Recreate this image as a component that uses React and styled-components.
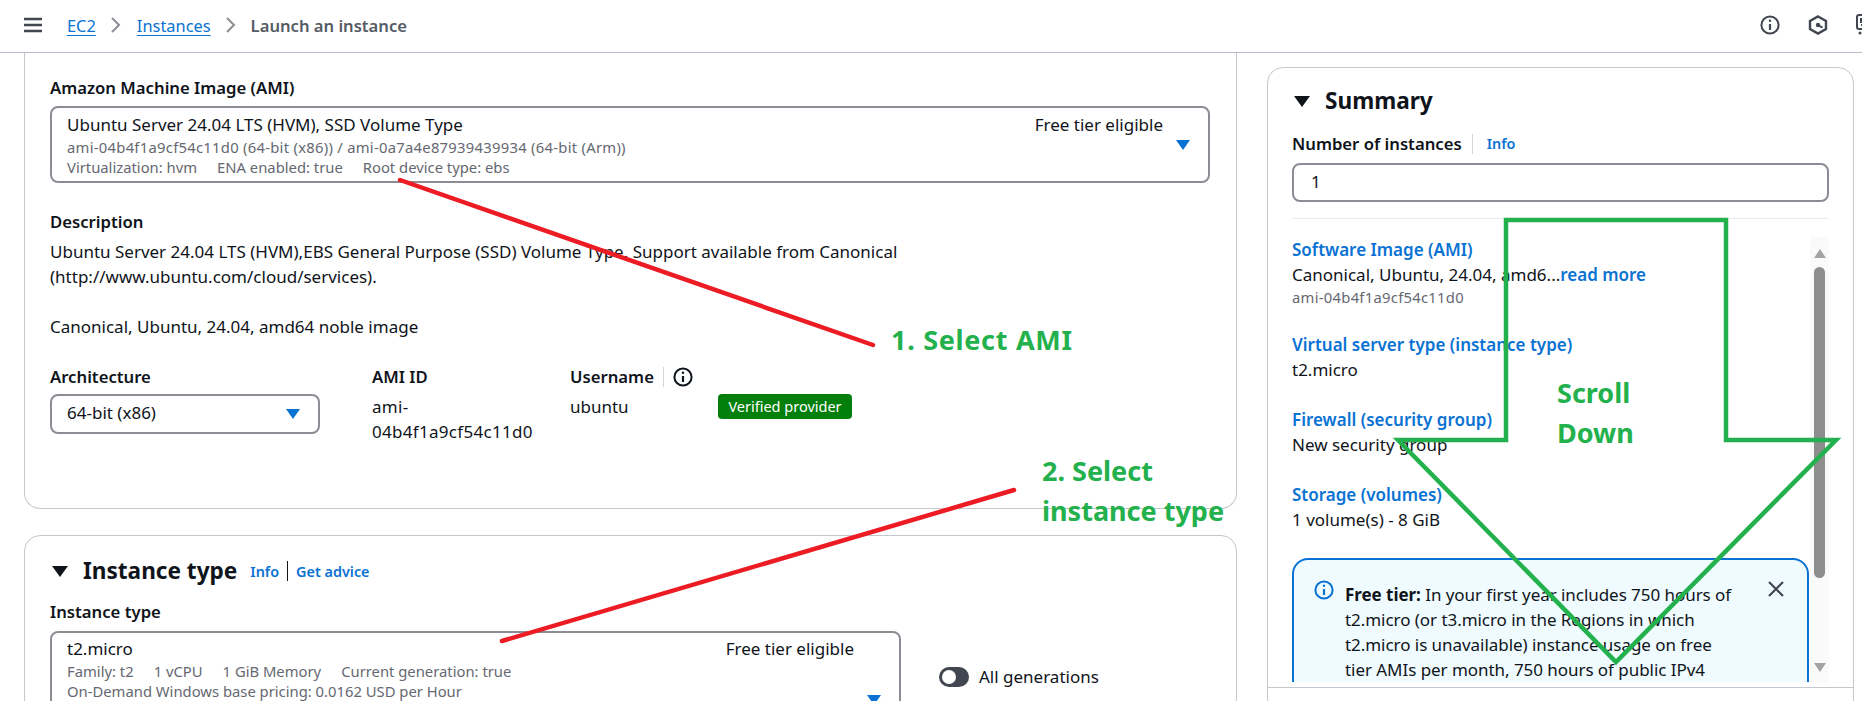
import React from "react";
import styled, { createGlobalStyle } from "styled-components";

const GlobalStyle = createGlobalStyle`
  html, body {
    margin: 0;
    padding: 0;
    background: #fff;
  }
  body {
    font-family: "Noto Sans", "Open Sans", sans-serif;
    font-size: 17px;
    line-height: 25px;
    color: #0f141a;
  }
`;

const Page = styled.div`
  position: relative;
  width: 1862px;
  height: 701px;
  overflow: hidden;
  background: #fff;
`;

const TopBar = styled.header`
  display: flex;
  align-items: center;
  height: 50px;
  padding: 0 0 2px 24px;
  border-bottom: 1px solid #b6bec9;
  box-sizing: content-box;
`;

const Crumb = styled.a`
  color: #0972d3;
  text-decoration: underline;
  text-underline-offset: 3px;
  font-size: 16.4px;
  margin-left: ${(p) => p.$before || 0}px;
`;

const CrumbCurrent = styled.span`
  color: #545b64;
  font-weight: 600;
  font-size: 16.6px;
`;

const BarIcons = styled.div`
  display: flex;
  align-items: center;
  gap: 28px;
  margin-left: auto;
  margin-right: -14px;
  color: #424650;
`;

const Columns = styled.div`
  display: flex;
  align-items: flex-start;
  gap: 30px;
  padding-left: 24px;
`;

const LeftColumn = styled.main`
  display: flex;
  flex-direction: column;
  gap: 26px;
  width: 1213px;
  flex-shrink: 0;
`;

const Card = styled.section`
  box-sizing: border-box;
  background: #fff;
  border: 1px solid #c6c6cd;
  border-radius: 16px;
  padding: 20px 25px;
`;

const ImageCard = styled(Card)`
  border-top: 0;
  border-top-left-radius: 0;
  border-top-right-radius: 0;
  padding-top: 22px;
  padding-bottom: 64px;
`;

const TypeCard = styled(Card)`
  height: 300px;
`;

const HeadingRow = styled.div`
  display: flex;
  align-items: center;
  height: 30px;
  margin-left: 2px;
`;

const Caret = styled.span`
  display: inline-block;
  flex-shrink: 0;
  width: 0;
  height: 0;
  border-left: ${(p) => p.$size / 2}px solid transparent;
  border-right: ${(p) => p.$size / 2}px solid transparent;
  border-top: ${(p) => p.$size * 0.72}px solid ${(p) => p.$color};
`;

const Heading = styled.h2`
  margin: 0 0 0 15px;
  font-size: 22.6px;
  line-height: 30px;
  font-weight: 700;
`;

const InfoLink = styled.a`
  color: #0972d3;
  font-size: 14.4px;
  font-weight: 600;
  margin-left: ${(p) => p.$before || 0}px;
`;

const Pipe = styled.span`
  width: 1px;
  height: 20px;
  margin: 0 ${(p) => p.$space}px;
  background: ${(p) => p.$color};
`;

const Label = styled.div`
  font-size: 16.7px;
  font-weight: 600;
  margin-bottom: ${(p) => p.$after ?? 5}px;
  margin-top: ${(p) => p.$before ?? 0}px;
  white-space: nowrap;
`;

const SelectBox = styled.div`
  box-sizing: border-box;
  display: flex;
  align-items: center;
  width: ${(p) => p.$width}px;
  height: ${(p) => p.$height}px;
  padding: ${(p) => p.$top ?? 4}px 18px 4px 15px;
  border: 2px solid #8c8c94;
  border-radius: 8px;
`;

const OptionText = styled.div`
  flex: 1;
  align-self: flex-start;
  min-width: 0;
`;

const SubLine = styled.div`
  display: flex;
  gap: 20px;
  font-size: 14.8px;
  line-height: 20px;
  letter-spacing: ${(p) => p.$track || 0}px;
  color: #656871;
  white-space: nowrap;
`;

const TierTag = styled.div`
  align-self: flex-start;
  margin-right: 13px;
  white-space: nowrap;
`;

const Paragraph = styled.p`
  margin: 0;
`;

const DetailRow = styled.div`
  display: flex;
  align-items: flex-start;
  margin-top: 25px;
`;

const DetailColumn = styled.div`
  width: ${(p) => p.$width}px;
  flex-shrink: 0;
  margin-right: ${(p) => p.$space || 0}px;
  white-space: nowrap;
`;

const AmiValue = styled.div`
  letter-spacing: 0.3px;
`;

const UsernameHead = styled.div`
  display: flex;
  align-items: center;
  font-size: 16.7px;
  font-weight: 600;
  margin-bottom: 5px;
`;

const Badge = styled.span`
  display: block;
  box-sizing: border-box;
  width: 134px;
  height: 25px;
  margin-top: 30px;
  border-radius: 4px;
  background: #037f0c;
  color: #fff;
  font-size: 14.5px;
  line-height: 25px;
  text-align: center;
  white-space: nowrap;
`;

const TypeRow = styled.div`
  display: flex;
  align-items: flex-start;
  gap: 38px;
`;

const ToggleGroup = styled.div`
  display: flex;
  align-items: center;
  gap: 10px;
  margin-top: 33px;
`;

const Toggle = styled.span`
  box-sizing: border-box;
  display: flex;
  align-items: center;
  width: 30px;
  height: 20px;
  padding-left: 3px;
  border-radius: 10px;
  background: #424650;
  &::before {
    content: "";
    width: 14px;
    height: 14px;
    border-radius: 50%;
    background: #fff;
  }
`;

const SummaryCard = styled(Card)`
  position: relative;
  width: 587px;
  height: 660px;
  flex-shrink: 0;
  margin-top: 14px;
  padding: 18px 24px 0;
`;

const NumberLabel = styled.div`
  display: flex;
  align-items: center;
  height: 25px;
  margin-top: 15px;
  font-size: 16.7px;
  font-weight: 600;
`;

const NumberInput = styled.div`
  box-sizing: border-box;
  width: 537px;
  height: 39px;
  margin-top: 7px;
  padding-left: 17px;
  border: 2px solid #8c8c94;
  border-radius: 8px;
  line-height: 33px;
`;

const Rule = styled.div`
  width: 537px;
  height: 1px;
  margin: 16px 0 18px;
  background: #e9ebed;
`;

const ScrollArea = styled.div`
  display: flex;
  width: 537px;
  height: 445px;
  overflow: hidden;
`;

const SummaryList = styled.div`
  width: 517px;
  flex-shrink: 0;
`;

const SummaryGroup = styled.div`
  margin-bottom: 25px;
`;

const SummaryTitle = styled.a`
  display: block;
  color: #0972d3;
  font-weight: 600;
`;

const SummaryValue = styled.div`
  white-space: nowrap;
`;

const ReadMore = styled.a`
  color: #0972d3;
  font-weight: 600;
`;

const SummaryMeta = styled.div`
  font-size: 14.8px;
  line-height: 20px;
  letter-spacing: 0.27px;
  color: #656871;
`;

const Alert = styled.div`
  box-sizing: border-box;
  display: flex;
  align-items: flex-start;
  gap: 11px;
  width: 517px;
  height: 200px;
  margin-top: 26px;
  padding: 20px 22px 0 20px;
  border: 2px solid #0972d3;
  border-radius: 16px;
  background: #f0fbff;
`;

const AlertText = styled.div`
  flex: 1;
  padding-top: 2px;
  letter-spacing: -0.05px;
  white-space: nowrap;
`;

const AlertClose = styled.span`
  display: flex;
  color: #424650;
`;

const Scrollbar = styled.div`
  display: flex;
  flex-direction: column;
  align-items: center;
  width: 19px;
  margin-left: 1px;
  padding-top: 12px;
  background: #fafafa;
`;

const ScrollUp = styled.span`
  width: 0;
  height: 0;
  border-left: 6px solid transparent;
  border-right: 6px solid transparent;
  border-bottom: 9px solid #a3a3a3;
`;

const ScrollDown = styled.span`
  width: 0;
  height: 0;
  margin-top: 85px;
  border-left: 6px solid transparent;
  border-right: 6px solid transparent;
  border-top: 9px solid #a3a3a3;
`;

const ScrollThumb = styled.span`
  width: 11px;
  height: 311px;
  margin-top: 9px;
  border-radius: 6px;
  background: #8d8d8d;
`;

const SummaryFooter = styled.div`
  position: absolute;
  left: 0;
  right: 0;
  top: 619px;
  height: 40px;
  border-top: 1px solid #c6c6cd;
  background: #fff;
`;

const Markup = styled.svg`
  position: absolute;
  left: 0;
  top: 0;
  pointer-events: none;
`;

const Note = styled.div`
  position: absolute;
  left: ${(p) => p.$x}px;
  top: ${(p) => p.$y}px;
  font-size: 27px;
  line-height: 40px;
  font-weight: 700;
  letter-spacing: ${(p) => p.$track || 0}px;
  color: #22b14c;
  white-space: nowrap;
`;

const MenuIcon = () => (
  <svg width="18" height="16" viewBox="0 0 18 16" fill="none" stroke="#424650" strokeWidth="2.4">
    <path d="M0 2h18M0 8h18M0 14h18" />
  </svg>
);

const ChevronIcon = styled.svg`
  margin: 0 ${(p) => p.$space}px;
`;

const Chevron = ({ space }) => (
  <ChevronIcon $space={space} width="12" height="18" viewBox="0 0 12 18" fill="none" stroke="#8c8c94" strokeWidth="2">
    <path d="M2 2l7 7-7 7" />
  </ChevronIcon>
);

const InfoCircle = ({ size = 20, color = "#424650", weight = 2 }) => (
  <svg width={size} height={size} viewBox="0 0 20 20" fill="none" stroke={color} strokeWidth={weight}>
    <circle cx="10" cy="10" r="8.6" />
    <path d="M10 9v6" strokeWidth="2.2" />
    <circle cx="10" cy="5.8" r="1.2" fill={color} stroke="none" />
  </svg>
);

const HexIcon = () => (
  <svg width="20" height="20" viewBox="0 0 20 20" fill="none" stroke="#424650" strokeWidth="2.4">
    <path d="M10 1.5l8 4.5v8l-8 4.5-8-4.5v-8z" />
    <circle cx="10" cy="10" r="2.2" fill="#424650" stroke="none" />
    <path d="M10 10l4.5 2.6" strokeWidth="2" />
  </svg>
);

const PanelIcon = () => (
  <svg width="20" height="22" viewBox="0 0 20 22" fill="none" stroke="#424650" strokeWidth="2">
    <rect x="1" y="1" width="18" height="14" rx="2" />
    <path d="M5 5h3v3H5zM5 11h3" />
    <circle cx="4" cy="19" r="1.5" fill="#424650" stroke="none" />
  </svg>
);

const CloseIcon = () => (
  <svg width="18" height="18" viewBox="0 0 18 18" fill="none" stroke="currentColor" strokeWidth="2.2">
    <path d="M2 2l14 14M16 2L2 16" />
  </svg>
);

const summaryItems = [
  {
    title: "Virtual server type (instance type)",
    value: "t2.micro",
  },
  {
    title: "Firewall (security group)",
    value: "New security group",
  },
];

export default function App() {
  return (
    <Page>
      <GlobalStyle />
      <TopBar>
        <MenuIcon />
        <Crumb $before={25}>EC2</Crumb>
        <Chevron space={14.5} />
        <Crumb>Instances</Crumb>
        <Chevron space={14} />
        <CrumbCurrent>Launch an instance</CrumbCurrent>
        <BarIcons>
          <InfoCircle />
          <HexIcon />
          <PanelIcon />
        </BarIcons>
      </TopBar>

      <Columns>
        <LeftColumn>
          <ImageCard>
            <Label $after={6}>Amazon Machine Image (AMI)</Label>
            <SelectBox $width={1160} $height={77}>
              <OptionText>
                Ubuntu Server 24.04 LTS (HVM), SSD Volume Type
                <SubLine $track={0.27}>ami-04b4f1a9cf54c11d0 (64-bit (x86)) / ami-0a7a4e87939439934 (64-bit (Arm))</SubLine>
                <SubLine>
                  <span>Virtualization: hvm</span>
                  <span>ENA enabled: true</span>
                  <span>Root device type: ebs</span>
                </SubLine>
              </OptionText>
              <TierTag>Free tier eligible</TierTag>
              <Caret $size={14} $color="#0972d3" />
            </SelectBox>

            <Label $before={26}>Description</Label>
            <Paragraph>
              Ubuntu Server 24.04 LTS (HVM),EBS General Purpose (SSD) Volume Type. Support available from Canonical
              <br />
              (http://www.ubuntu.com/cloud/services).
              <br />
              <br />
              Canonical, Ubuntu, 24.04, amd64 noble image
            </Paragraph>

            <DetailRow>
              <DetailColumn $width={270} $space={52}>
                <Label>Architecture</Label>
                <SelectBox $width={270} $height={40}>
                  <OptionText>64-bit (x86)</OptionText>
                  <Caret $size={14} $color="#0972d3" />
                </SelectBox>
              </DetailColumn>
              <DetailColumn $width={165} $space={33}>
                <Label>AMI ID</Label>
                <AmiValue>
                  ami-
                  <br />
                  04b4f1a9cf54c11d0
                </AmiValue>
              </DetailColumn>
              <DetailColumn $width={148}>
                <UsernameHead>
                  Username
                  <Pipe $space={9} $color="#d1d5db" />
                  <InfoCircle color="#0f141a" />
                </UsernameHead>
                ubuntu
              </DetailColumn>
              <Badge>Verified provider</Badge>
            </DetailRow>
          </ImageCard>

          <TypeCard>
            <HeadingRow>
              <Caret $size={16} $color="#0f141a" />
              <Heading>Instance type</Heading>
              <InfoLink $before={13}>Info</InfoLink>
              <Pipe $space={8} $color="#0f141a" />
              <InfoLink>Get advice</InfoLink>
            </HeadingRow>
            <Label $before={13} $after={7}>
              Instance type
            </Label>
            <TypeRow>
              <SelectBox $width={851} $height={138} $top={3}>
                <OptionText>
                  t2.micro
                  <SubLine>
                    <span>Family: t2</span>
                    <span>1 vCPU</span>
                    <span>1 GiB Memory</span>
                    <span>Current generation: true</span>
                  </SubLine>
                  <SubLine>On-Demand Windows base pricing: 0.0162 USD per Hour</SubLine>
                </OptionText>
                <TierTag>Free tier eligible</TierTag>
                <Caret $size={14} $color="#0972d3" />
              </SelectBox>
              <ToggleGroup>
                <Toggle />
                All generations
              </ToggleGroup>
            </TypeRow>
          </TypeCard>
        </LeftColumn>

        <SummaryCard>
          <HeadingRow>
            <Caret $size={16} $color="#0f141a" />
            <Heading>Summary</Heading>
          </HeadingRow>
          <NumberLabel>
            Number of instances
            <Pipe $space={10} $color="#d1d5db" />
            <InfoLink $before={4}>Info</InfoLink>
          </NumberLabel>
          <NumberInput>1</NumberInput>
          <Rule />
          <ScrollArea>
            <SummaryList>
              <SummaryGroup>
                <SummaryTitle>Software Image (AMI)</SummaryTitle>
                <SummaryValue>
                  Canonical, Ubuntu, 24.04, amd6...<ReadMore>read more</ReadMore>
                </SummaryValue>
                <SummaryMeta>ami-04b4f1a9cf54c11d0</SummaryMeta>
              </SummaryGroup>
              {summaryItems.map((item) => (
                <SummaryGroup key={item.title}>
                  <SummaryTitle>{item.title}</SummaryTitle>
                  <SummaryValue>{item.value}</SummaryValue>
                </SummaryGroup>
              ))}
              <SummaryTitle>Storage (volumes)</SummaryTitle>
              <SummaryValue>1 volume(s) - 8 GiB</SummaryValue>
              <Alert>
                <InfoCircle color="#0972d3" />
                <AlertText>
                  <strong>Free tier:</strong> In your first year includes 750 hours of
                  <br />
                  t2.micro (or t3.micro in the Regions in which
                  <br />
                  t2.micro is unavailable) instance usage on free
                  <br />
                  tier AMIs per month, 750 hours of public IPv4
                </AlertText>
                <AlertClose>
                  <CloseIcon />
                </AlertClose>
              </Alert>
            </SummaryList>
            <Scrollbar>
              <ScrollUp />
              <ScrollThumb />
              <ScrollDown />
            </Scrollbar>
          </ScrollArea>
          <SummaryFooter />
        </SummaryCard>
      </Columns>

      <Markup width="1862" height="701" fill="none">
        <path d="M400 180L873 345" stroke="#ed1c24" strokeWidth="4.5" strokeLinecap="round" />
        <path d="M502 641L1014 490" stroke="#ed1c24" strokeWidth="4.5" strokeLinecap="round" />
        <path
          d="M1506 220H1726V440H1836L1616 662L1398 440H1506Z"
          stroke="#22b14c"
          strokeWidth="4.5"
          strokeLinejoin="miter"
        />
      </Markup>
      <Note $x={891} $y={320} $track={0.7}>
        1. Select AMI
      </Note>
      <Note $x={1042} $y={451}>
        2. Select
      </Note>
      <Note $x={1042} $y={491}>
        instance type
      </Note>
      <Note $x={1557} $y={373}>
        Scroll
      </Note>
      <Note $x={1557} $y={413}>
        Down
      </Note>
    </Page>
  );
}
